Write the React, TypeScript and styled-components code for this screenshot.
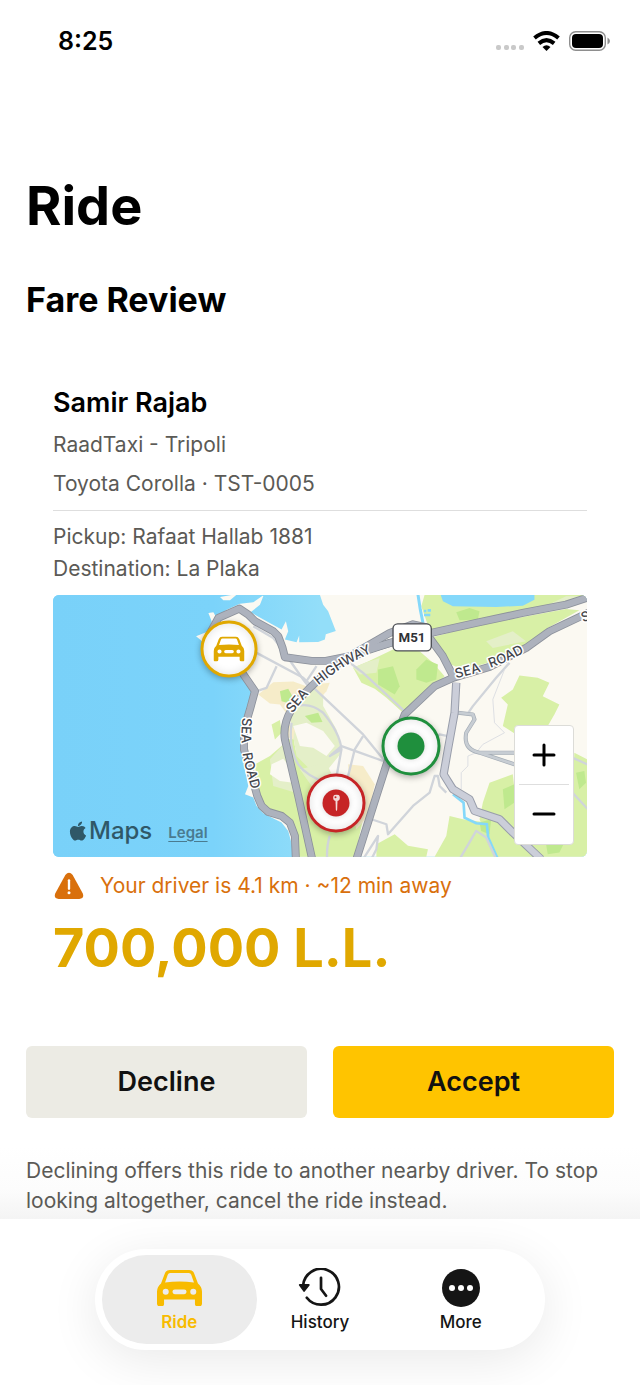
import React from "react";
import styled, { createGlobalStyle } from "styled-components";
import { FaApple } from "react-icons/fa";

const colors = {
  text: "#000",
  muted: "#5b5a56",
  gold: "#e0a800",
  tabGold: "#f8bb00",
  accept: "#ffc400",
  decline: "#ecebe4",
  warning: "#d9700c",
  green: "#1f8f3d",
  red: "#c62426",
  divider: "#dedede",
};

const GlobalStyle = createGlobalStyle`
  * {
    box-sizing: border-box;
  }

  body {
    margin: 0;
    background: #fff;
    color: ${colors.text};
    font-family: Inter, "Liberation Sans", sans-serif;
  }

  h1, h2, h3, p {
    margin: 0;
  }

  button {
    border: 0;
    padding: 0;
    font-family: inherit;
    cursor: pointer;
  }
`;

const Screen = styled.div`
  display: flex;
  flex-direction: column;
  min-height: 100vh;
`;

const StatusBar = styled.header`
  display: flex;
  align-items: center;
  justify-content: space-between;
  height: 82px;
  padding: 0 30px 0 58px;
`;

const Clock = styled.time`
  font-size: 25px;
  font-weight: 600;
`;

const StatusIcons = styled.div`
  display: flex;
  align-items: center;
  gap: 9px;
`;

const Main = styled.main`
  display: flex;
  flex-direction: column;
  flex: 1;
  padding-top: 90px;
`;

const Title = styled.h1`
  padding: 0 26px;
  font-size: 54px;
  line-height: 68px;
  font-weight: 700;
`;

const Subtitle = styled.h2`
  margin-top: 38px;
  padding: 0 26px;
  font-size: 34px;
  line-height: 44px;
  font-weight: 700;
`;

const Card = styled.section`
  display: flex;
  flex-direction: column;
  margin-top: 64px;
  padding: 0 53px;
`;

const DriverName = styled.h3`
  font-size: 27px;
  line-height: 34px;
  font-weight: 600;
`;

const Detail = styled.p<{ gap: number }>`
  margin-top: ${({ gap }) => gap}px;
  color: ${colors.muted};
  font-size: 21px;
  line-height: 28px;
`;

const Divider = styled.hr`
  width: 100%;
  height: 1px;
  margin: 12px 0 0;
  border: 0;
  background: ${colors.divider};
`;

const MapFrame = styled.div`
  position: relative;
  overflow: hidden;
  margin-top: 12px;
  aspect-ratio: 535 / 262;
  border-radius: 6px;
  background: #7ad3fb;
`;

const MapDrawing = styled.svg`
  display: block;
  width: 100%;
  height: 100%;
`;

const Pin = styled.div<{ left: number; top: number; size: number; color: string }>`
  position: absolute;
  left: ${({ left }) => left}%;
  top: ${({ top }) => top}%;
  display: flex;
  align-items: center;
  justify-content: center;
  width: ${({ size }) => size}px;
  height: ${({ size }) => size}px;
  transform: translate(-50%, -50%);
  border: 3px solid ${({ color }) => color};
  border-radius: 50%;
  background: #fff;
  color: ${({ color }) => color};
  box-shadow: 0 2px 6px rgba(0, 0, 0, 0.3), inset 0 0 10px rgba(0, 0, 0, 0.12);
`;

const PinDot = styled.span`
  display: flex;
  align-items: center;
  justify-content: center;
  width: 27px;
  height: 27px;
  border-radius: 50%;
  background: currentColor;
  box-shadow: 0 0 6px rgba(0, 0, 0, 0.15);
`;

const ZoomControl = styled.div`
  position: absolute;
  right: 13px;
  bottom: 12px;
  display: flex;
  flex-direction: column;
  width: 60px;
  height: 120px;
  padding: 0 4px;
  border: 1px solid #dcdcd8;
  border-radius: 4px;
  background: #fff;
`;

const ZoomButton = styled.button`
  display: flex;
  align-items: center;
  justify-content: center;
  flex: 1;
  background: #fff;

  & + & {
    border-top: 1px solid ${colors.divider};
  }
`;

const Attribution = styled.div`
  position: absolute;
  left: 14px;
  bottom: 10px;
  display: flex;
  align-items: center;
  color: #2f5868;
`;

const MapsName = styled.span`
  margin-right: 16px;
  font-size: 24px;
  line-height: 32px;
  font-weight: 500;
`;

const LegalLink = styled.a`
  padding-top: 4px;
  color: #4a7b90;
  font-size: 15px;
  line-height: 18px;
  font-weight: 600;
  text-underline-offset: 3px;
`;

const Notice = styled.p`
  display: flex;
  align-items: center;
  gap: 16px;
  margin-top: 15px;
  padding-left: 1px;
  color: ${colors.warning};
  font-size: 21px;
  line-height: 28px;
`;

const Price = styled.p`
  margin-top: 14px;
  color: ${colors.gold};
  font-size: 54px;
  line-height: 68px;
  font-weight: 700;
`;

const Actions = styled.div`
  display: grid;
  grid-template-columns: 1fr 1fr;
  gap: 26px;
  margin-top: 64px;
  padding: 0 26px;
`;

const ActionButton = styled.button<{ primary?: boolean }>`
  height: 72px;
  border-radius: 6px;
  background: ${({ primary }) => (primary ? colors.accept : colors.decline)};
  color: #111;
  font-size: 27px;
  font-weight: 600;
`;

const Note = styled.p`
  flex: 1;
  margin-top: 28px;
  padding: 10px 26px 2px;
  background: linear-gradient(#fff, #fcfcfc 60%, #f4f4f4);
  color: ${colors.muted};
  font-size: 21px;
  line-height: 30px;
`;

const Footer = styled.footer`
  overflow: hidden;
  padding: 30px 95px 35px;
`;

const TabBar = styled.nav`
  display: grid;
  grid-template-columns: repeat(3, 1fr);
  max-width: 450px;
  margin: 0 auto;
  padding: 6px 14px;
  border-radius: 51px;
  background: #fff;
  box-shadow: 0 10px 50px rgba(0, 0, 0, 0.09);
`;

const Tab = styled.a<{ active?: boolean }>`
  display: flex;
  flex-direction: column;
  align-items: center;
  height: 89px;
  margin: 0 -7px;
  padding-top: 13px;
  border-radius: 45px;
  background: ${({ active }) => (active ? "#ececec" : "transparent")};
  color: ${({ active }) => (active ? colors.tabGold : "#151515")};
  font-size: 17px;
  line-height: 20px;
  font-weight: ${({ active }) => (active ? 600 : 500)};
  text-decoration: none;
`;

const TabIcon = styled.span`
  display: flex;
  align-items: center;
  justify-content: center;
  height: 40px;
  margin-bottom: 4px;
`;

const CarIcon = ({ width }: { width: number }) => (
  <svg width={width} viewBox="0 0 134 108" fill="currentColor" aria-hidden="true">
    <path
      fillRule="evenodd"
      d="M12 40L23 11Q27 0 38 0H96Q107 0 111 11L122 40Q134 50 134 64V100Q134 108 127 108H120Q113 108 113 101V88H21V101Q21 108 14 108H7Q0 108 0 100V64Q0 50 12 40ZM24 37Q67 32 110 37L102 14Q100 9 95 9H39Q34 9 32 14ZM26 56a9 9 0 1 0 0 18a9 9 0 1 0 0-18ZM108 56a9 9 0 1 0 0 18a9 9 0 1 0 0-18ZM53 58a7 7 0 0 0 0 14H81a7 7 0 0 0 0-14Z"
    />
  </svg>
);

const HistoryIcon = () => (
  <svg width="46" viewBox="0 0 136 116" fill="none" stroke="currentColor" strokeWidth="8" strokeLinecap="round" aria-hidden="true">
    <path d="M18 52A53 53 0 1 1 29 88" />
    <path d="M71 29V62L86 82" strokeLinejoin="round" />
    <path d="M8 50H35L21 68Z" fill="currentColor" strokeWidth="5" strokeLinejoin="round" />
  </svg>
);

const MoreIcon = () => (
  <svg width="38" viewBox="0 0 114 114" aria-hidden="true">
    <circle cx="57" cy="57" r="57" fill="currentColor" />
    <circle cx="30" cy="57" r="9" fill="#fff" />
    <circle cx="57" cy="57" r="9" fill="#fff" />
    <circle cx="84" cy="57" r="9" fill="#fff" />
  </svg>
);

const SignalIcon = () => (
  <svg width="28" height="20" viewBox="0 0 28 20" fill="#c9c9c9" aria-hidden="true">
    <rect x="0" y="14" width="5" height="5" rx="2" />
    <rect x="8" y="14" width="5" height="5" rx="2" />
    <rect x="15" y="14" width="5" height="5" rx="2" />
    <rect x="23" y="14" width="5" height="5" rx="2" />
  </svg>
);

const WifiIcon = () => (
  <svg width="27" height="20" viewBox="0 0 80 60" fill="none" stroke="#000" strokeWidth="12" aria-hidden="true">
    <path d="M4 21Q40 -9 76 21" />
    <path d="M17 37Q40 18 63 37" />
    <path d="M28 48Q40 38 52 48L40 60Z" fill="#000" stroke="none" />
  </svg>
);

const BatteryIcon = () => (
  <svg width="41" height="20" viewBox="0 0 41 20" aria-hidden="true">
    <rect x="0.7" y="0.7" width="35.6" height="18.6" rx="6" fill="none" stroke="#8e8e8e" strokeWidth="1.4" />
    <rect x="3" y="3" width="31" height="14" rx="4" fill="#000" />
    <path d="M38.500 6.500Q41 8 41 10Q41 12 38.500 13.500Z" fill="#8e8e8e" />
  </svg>
);

const WarningIcon = () => (
  <svg width="30" height="28" viewBox="0 0 90 84" aria-hidden="true">
    <path d="M34 9Q45 -5 56 9L86 64Q92 80 76 81H14Q-2 80 4 64Z" fill="currentColor" />
    <path d="M45 25V50" stroke="#fff" strokeWidth="7" strokeLinecap="round" />
    <circle cx="45" cy="62" r="4.500" fill="#fff" />
  </svg>
);

const mainRoads = [
  "M505 140L535 85L598 57L625 75L645 95L700 125L715 140L728 175L735 203L815 214H858L930 200L1050 160L1175 130L1310 100L1450 70L1580 45L1650 22",
  "M935 196L990 165L1050 130L1120 104L1165 114",
  "M600 240L645 305L630 360L612 420L612 480L635 560L652 620L665 650L685 668L725 680L750 700L765 740L768 810",
  "M817 810L775 620L735 450Q728 405 755 360Q790 305 890 225L990 178L1060 158",
  "M950 810L1010 620L1055 480L1095 375L1185 290L1240 265L1350 232L1460 175L1530 125L1650 68",
  "M1170 145L1210 200L1245 268",
];

const sideRoads = [
  "M640 110L700 145L720 170L790 270L805 290",
  "M650 190L790 265L970 435L1035 515",
  "M710 230L680 295L650 305",
  "M750 360Q800 330 850 370Q900 430 905 480L885 590",
  "M755 400Q745 480 775 525Q800 560 860 580",
  "M800 275L830 230",
  "M905 200L970 250L1100 370",
  "M970 440L945 480L920 580",
  "M905 470L960 490L1030 515",
  "M905 480L870 500L905 470",
  "M1410 220L1370 265L1300 350L1285 372",
  "M1185 450L1200 435L1225 440",
  "M995 690L1040 705L1045 735L1120 650L1170 610L1185 560L1195 560L1200 590L1220 610",
  "M970 810L1015 740L1010 780L995 810",
  "M870 740Q860 770 862 810",
  "M1260 810L1310 725L1340 745L1370 810",
  "M1600 505L1650 528",
  "M1590 600L1650 665",
];

const brightGreens = [
  "M1155 15H1640V32L1500 55L1330 88L1170 122L1145 50Z",
  "M1170 145L1310 108L1580 58L1620 62L1525 115L1480 155L1400 205L1270 240L1210 215L1190 170Z",
  "M940 235L980 218L1060 180L1140 185L1180 220L1215 260L1170 310L1090 370L1040 325L1005 298L965 280Z",
  "M1440 258L1495 265L1530 280L1510 320L1560 345L1545 375L1525 410L1430 435L1390 410L1405 345L1385 325L1420 300Z",
  "M1350 580L1420 555L1425 600L1600 600L1605 490L1643 510V803H1370L1340 740L1320 690L1330 640Z",
  "M1185 803L1220 740L1230 680L1270 690L1340 700L1380 803Z",
  "M1010 765L1065 735L1105 770L1165 780L1160 803H1010Z",
  "M645 525L690 500L760 440L780 560L815 803H770V735L745 685L680 662L655 620Z",
  "M750 480L800 490L840 540L950 590L985 620L945 803H820Z",
  "M695 405L720 392L725 430L705 450Z",
  "M790 370L840 375L850 410L880 430L860 445L800 400Z",
];

const paleGreens = [
  "M745 350L830 285L850 310L850 350L890 420L905 490L840 570L770 500Z",
  "M690 510L740 455L765 610L700 590Z",
  "M780 540L860 520L900 610L850 640Z",
  "M1500 58L1580 20H1640L1625 38Z",
  "M1340 155L1420 125L1460 155L1360 175Z",
  "M940 235L980 218L1020 205L1010 250L960 255Z",
];

const deepGreens = [
  "M1015 240L1060 230L1080 290L1065 315L1015 285Z",
  "M1130 240L1160 210L1195 225L1190 270L1160 280L1130 270Z",
  "M1250 68L1290 55L1320 65L1315 90L1260 92Z",
  "M720 305L745 298L760 325L750 342L725 335Z",
  "M1320 700L1355 690L1350 735L1325 725Z",
  "M1390 600L1425 585V640L1395 660Z",
  "M1520 765L1580 750L1560 790L1525 795Z",
  "M1610 550L1635 545L1640 580L1620 600Z",
  "M795 380L835 370L848 398L815 400Z",
];

const CityMap = () => (
  <MapDrawing viewBox="38 15 1605 788" preserveAspectRatio="xMidYMid slice" role="img" aria-label="Map of the ride">
    <defs>
      <linearGradient id="sea" x1="0" y1="0" x2="1" y2="0">
        <stop offset="0" stopColor="#79d1f9" />
        <stop offset="0.3" stopColor="#7bd3fa" />
        <stop offset="0.5" stopColor="#93def9" />
      </linearGradient>
      <path id="seaRoadWest" d="M608 384Q598 470 618 540L650 660" />
      <path id="seaHighway" d="M750 366Q800 295 885 238Q940 200 1060 150" />
      <path id="seaRoadEast" d="M1250 268Q1380 240 1510 160" />
    </defs>

    <rect x="38" y="15" width="1605" height="788" fill="url(#sea)" />
    <path
      d="M505 70L520 68L530 85L560 60L600 42L640 38L668 18L710 45L670 20L660 45L632 68L680 95L725 120L738 95L745 125L735 150L770 158L778 138V158L835 157L855 150L858 134L888 124L865 65L850 45L840 15H1643V803H757L757 770L745 725L725 700L705 690L670 672L650 650L640 625L615 615L625 590L610 520L600 470L602 430L618 380L640 305L620 270L580 250L480 150L468 140L505 125L515 95Z"
      fill="#fbf9f2"
    />
    <path d="M540 22L580 15H590L570 32H550Z" fill="#fbf9f2" />

    {brightGreens.map(d => (
      <path key={d} d={d} fill="#d8f0a6" />
    ))}
    {paleGreens.map(d => (
      <path key={d} d={d} fill="#e4efc8" />
    ))}
    {deepGreens.map(d => (
      <path key={d} d={d} fill="#bfe98e" />
    ))}
    <path d="M1203 15L1210 35L1240 50L1370 52L1450 48L1485 30V15Z" fill="#84d8fa" />
    <path d="M655 315L700 278L760 276L800 290L780 320L755 345L765 365L745 380L720 345L690 342Z" fill="#f6ecc9" />
    <path d="M720 305L745 298L760 325L750 342L725 335Z" fill="#bfe98e" />
    <path d="M820 285L870 280L860 305L845 322Z" fill="#f6ecc9" />
    <path d="M740 400L765 420L760 450L735 440Z" fill="#f6ecc9" />
    <path d="M925 525L970 530L1005 585L985 680L950 720L930 650Z" fill="#f6ecc9" />
    <path d="M760 410L800 400L850 425L885 470L860 500L820 475L780 470Z" fill="#fbf9f2" />
    <path d="M695 525L730 508L755 540L760 580L720 575L690 555Z" fill="#fbf9f2" />

    <g fill="none" stroke="#84d8fa">
      <path d="M1135 15L1142 60L1150 100" strokeWidth="9" />
      <path d="M1153 64H1160M1164 62H1174M1153 76H1172" strokeWidth="8" />
      <path d="M1240 615L1272 640L1275 685L1310 702L1342 705L1346 745L1375 810" strokeWidth="8" />
    </g>

    <g fill="none" stroke="#d0d4da" strokeWidth="7" strokeLinejoin="round">
      {sideRoads.map(d => (
        <path key={d} d={d} />
      ))}
    </g>
    <path d="M1395 240L1360 330L1365 400L1395 430L1330 465L1310 490M1310 490L1285 500V530L1265 550V600" fill="none" stroke="#dddfe3" strokeWidth="3" />
    <g fill="none" strokeLinejoin="round">
      <path d="M1255 370L1300 375L1305 390L1280 430Q1270 480 1320 490H1430M1320 490L1440 530" stroke="#a5adb6" strokeWidth="12" />
      <path d="M1255 370L1300 375L1305 390L1280 430Q1270 480 1320 490H1430M1320 490L1440 530" stroke="#c7cdd3" strokeWidth="8" />
      <path d="M1250 280L1245 370L1225 480L1212 555L1240 600L1290 630L1305 665L1380 690L1420 730L1505 810" stroke="#989daa" strokeWidth="25" />
      <path d="M1250 280L1245 370L1225 480L1212 555L1240 600L1290 630L1305 665L1380 690L1420 730L1505 810" stroke="#cbced9" strokeWidth="19" />
      {mainRoads.map(d => (
        <path key={d} d={d} stroke="#8c919b" strokeWidth="24" />
      ))}
      {mainRoads.map(d => (
        <path key={d} d={d} stroke="#adb2bd" strokeWidth="19" />
      ))}
    </g>

    <g
      fill="#44464c"
      stroke="#fff"
      strokeWidth="9"
      strokeLinejoin="round"
      paintOrder="stroke"
      fontFamily="Inter, sans-serif"
      fontSize="40"
      fontWeight="500"
    >
      <text>
        <textPath href="#seaRoadWest">SEA</textPath>
      </text>
      <text>
        <textPath href="#seaRoadWest" startOffset="108">
          ROAD
        </textPath>
      </text>
      <text dy="10">
        <textPath href="#seaHighway">SEA</textPath>
      </text>
      <text dy="10">
        <textPath href="#seaHighway" startOffset="118">
          HIGHWAY
        </textPath>
      </text>
      <text dy="-2">
        <textPath href="#seaRoadEast">SEA</textPath>
      </text>
      <text dy="-2">
        <textPath href="#seaRoadEast" startOffset="108">
          ROAD
        </textPath>
      </text>
      <text x="1631" y="98" transform="rotate(-20 1631 98)">
        S
      </text>
    </g>

    <rect x="1060" y="103" width="115" height="81" rx="14" fill="#fff" stroke="#4a4c52" strokeWidth="4" />
    <text x="1117" y="158" textAnchor="middle" fontFamily="Roboto, sans-serif" fontSize="40" fontWeight="700" fill="#2f3136">
      M51
    </text>
  </MapDrawing>
);

const tabs = [
  { href: "#ride", name: "Ride", icon: <CarIcon width={45} /> },
  { href: "#history", name: "History", icon: <HistoryIcon /> },
  { href: "#more", name: "More", icon: <MoreIcon /> },
];

const RideMap = () => (
  <MapFrame>
    <CityMap />
    <Pin left={33} top={20.5} size={57} color={colors.gold}>
      <CarIcon width={31} />
    </Pin>
    <Pin left={67} top={57.6} size={59} color={colors.green}>
      <PinDot />
    </Pin>
    <Pin left={53} top={79.5} size={59} color={colors.red}>
      <PinDot>
        <svg width="8" height="17" viewBox="0 0 24 51" fill="#f3dada" aria-hidden="true">
          <circle cx="12" cy="10" r="10" />
          <path d="M9 18H15L14 46L12 50L10 46Z" />
          <circle cx="9" cy="8" r="3" fill={colors.red} />
        </svg>
      </PinDot>
    </Pin>
    <Attribution>
      <FaApple size={22} />
      <MapsName>Maps</MapsName>
      <LegalLink href="#legal">Legal</LegalLink>
    </Attribution>
    <ZoomControl>
      <ZoomButton type="button" aria-label="Zoom in">
        <svg width="24" height="24" viewBox="0 0 24 24" stroke="#000" strokeWidth="3" strokeLinecap="round">
          <path d="M2 12H22M12 2V22" />
        </svg>
      </ZoomButton>
      <ZoomButton type="button" aria-label="Zoom out">
        <svg width="24" height="24" viewBox="0 0 24 24" stroke="#000" strokeWidth="3" strokeLinecap="round">
          <path d="M2 12H22" />
        </svg>
      </ZoomButton>
    </ZoomControl>
  </MapFrame>
);

const App = () => (
  <Screen>
    <GlobalStyle />
    <StatusBar>
      <Clock>8:25</Clock>
      <StatusIcons>
        <SignalIcon />
        <WifiIcon />
        <BatteryIcon />
      </StatusIcons>
    </StatusBar>
    <Main>
      <Title>Ride</Title>
      <Subtitle>Fare Review</Subtitle>
      <Card>
        <DriverName>Samir Rajab</DriverName>
        <Detail gap={11}>RaadTaxi - Tripoli</Detail>
        <Detail gap={11}>Toyota Corolla · TST-0005</Detail>
        <Divider />
        <Detail gap={12}>Pickup: Rafaat Hallab 1881</Detail>
        <Detail gap={4}>Destination: La Plaka</Detail>
        <RideMap />
        <Notice>
          <WarningIcon />
          Your driver is 4.1 km · ~12 min away
        </Notice>
        <Price>700,000 L.L.</Price>
      </Card>
      <Actions>
        <ActionButton type="button">Decline</ActionButton>
        <ActionButton type="button" primary>
          Accept
        </ActionButton>
      </Actions>
      <Note>Declining offers this ride to another nearby driver. To stop looking altogether, cancel the ride instead.</Note>
    </Main>
    <Footer>
      <TabBar>
        {tabs.map(({ href, name, icon }, index) => (
          <Tab key={name} href={href} active={index === 0}>
            <TabIcon>{icon}</TabIcon>
            {name}
          </Tab>
        ))}
      </TabBar>
    </Footer>
  </Screen>
);

export default App;
